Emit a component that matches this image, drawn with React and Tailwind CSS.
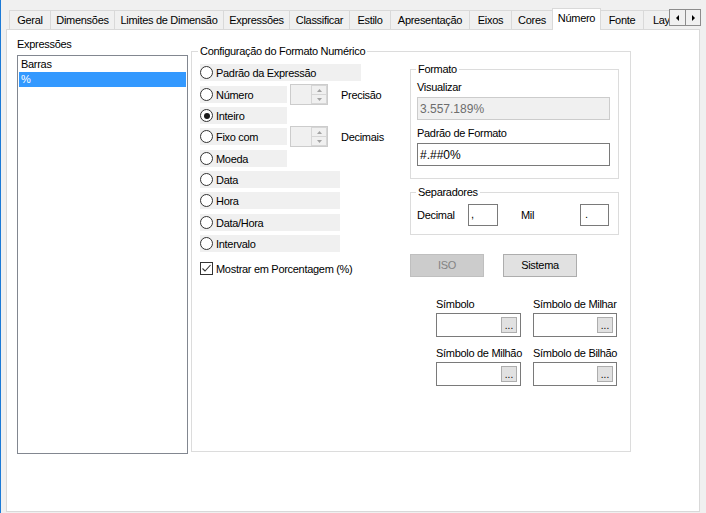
import React from 'react';

const tabs = [
  ['Geral', 41], ['Dimensões', 64], ['Limites de Dimensão', 109], ['Expressões', 66],
  ['Classificar', 60], ['Estilo', 41], ['Apresentação', 79], ['Eixos', 42], ['Cores', 41],
  ['Número', 49], ['Fonte', 42], ['Layout', 50],
];

const radios = [
  { label: 'Padrão da Expressão', w: 'w-[161px]', mt: 'mt-0' },
  { label: 'Número', w: 'w-[87px]', mt: 'mt-[5px]', spin: 'Precisão' },
  { label: 'Inteiro', w: 'w-[87px]', mt: 'mt-[4px]', checked: true },
  { label: 'Fixo com', w: 'w-[87px]', mt: 'mt-[4px]', spin: 'Decimais' },
  { label: 'Moeda', w: 'w-[87px]', mt: 'mt-[5px]' },
  { label: 'Data', w: 'w-[140px]', mt: 'mt-[4px]' },
  { label: 'Hora', w: 'w-[140px]', mt: 'mt-[4px]' },
  { label: 'Data/Hora', w: 'w-[140px]', mt: 'mt-[5px]' },
  { label: 'Intervalo', w: 'w-[140px]', mt: 'mt-[4px]' },
];

function Radio({ checked }) {
  return (
    <span className="w-[13px] h-[13px] shrink-0 rounded-full border border-[#333] bg-white flex items-center justify-center">
      {checked && <span className="w-[6px] h-[6px] rounded-full bg-[#1a1a1a]" />}
    </span>
  );
}

function Spinner() {
  return (
    <div className="w-[38px] h-[21px] shrink-0 border border-[#cccccc] bg-[#f0f0f0] flex justify-end">
      <div className="w-[16px] flex flex-col">
        <div className="flex-1 border border-[#d6d6d6] flex items-center justify-center">
          <svg width="5" height="3" viewBox="0 0 5 3"><path d="M2.5 0L5 3H0z" fill="#a3a3a3" /></svg>
        </div>
        <div className="flex-1 border border-t-0 border-[#d6d6d6] flex items-center justify-center">
          <svg width="5" height="3" viewBox="0 0 5 3"><path d="M0 0H5L2.5 3z" fill="#a3a3a3" /></svg>
        </div>
      </div>
    </div>
  );
}

function Legend({ children, left }) {
  return (
    <span className={`absolute -top-[8px] ${left} px-[2px] bg-white leading-[14px] whitespace-nowrap`}>{children}</span>
  );
}

function SymbolBox({ label, mt }) {
  return (
    <div className={mt}>
      <div className="leading-[14px] whitespace-nowrap">{label}</div>
      <div className="mt-[2px] h-[24px] border border-[#7a7a7a] bg-white flex items-center justify-end pr-[3px]">
        <div className="w-[16px] h-[16px] bg-[#e1e1e1] border border-[#adadad] flex items-end justify-center text-[10px] leading-[12px] tracking-normal">...</div>
      </div>
    </div>
  );
}

export default function App() {
  return (
    <div
      className="w-[706px] h-[513px] bg-[#f0f0f0] border-l border-[#1c7ad6] text-[11px] tracking-[-0.3px] text-black overflow-hidden"
      style={{ fontFamily: '"Liberation Sans", Arial, sans-serif' }}
    >
      {/* tab strip */}
      <div className="flex items-end mt-[10px] h-[19px] ml-[8px]">
        <div className="flex items-end w-[660px] h-[19px]">
          {tabs.map(([name, w], i) => {
            const sel = name === 'Número';
            const afterSel = i > 0 && tabs[i - 1][0] === 'Número';
            if (sel) {
              return (
                <div key={name} style={{ width: w }} className="relative z-10 shrink-0 h-[22px] -mb-[1px] bg-white border border-b-0 border-[#d9d9d9] flex justify-center pt-[2px] leading-[14px]">
                  {name}
                </div>
              );
            }
            return (
              <div key={name} style={{ width: w }} className={`shrink-0 h-[19px] bg-[#f0f0f0] border-t border-[#d9d9d9] ${afterSel ? '' : 'border-l'} flex items-center justify-center leading-[14px] whitespace-nowrap overflow-hidden`}>
                {name}
              </div>
            );
          })}
        </div>
        <div className="relative z-20 self-start -mt-[1px] flex h-[17px] bg-[#f0f0f0]">
          <div className="w-[17px] h-[17px] border border-[#8c8c8c] bg-[#f0f0f0] flex items-center justify-center">
            <svg width="3" height="6" viewBox="0 0 3 6"><path d="M3 0V6L0 3z" fill="#000" /></svg>
          </div>
          <div className="w-[15px] h-[17px] border border-l-0 border-[#8c8c8c] bg-[#f0f0f0] flex items-center justify-center">
            <svg width="3" height="6" viewBox="0 0 3 6"><path d="M0 0V6L3 3z" fill="#000" /></svg>
          </div>
        </div>
      </div>

      {/* panel */}
      <div className="ml-[5px] w-[694px] h-[483px] bg-white border border-[#d9d9d9] flex items-start pl-[10px]">
        {/* expressions list */}
        <div className="w-[171px] mt-[7px] shrink-0">
          <div className="leading-[14px]">Expressões</div>
          <div className="mt-[4px] h-[399px] border border-[#828790] bg-white p-[1px]">
            <div className="h-[15px] px-[2px] leading-[15px]">Barras</div>
            <div className="h-[15px] px-[2px] leading-[15px] bg-[#3399ff] text-white">%</div>
          </div>
        </div>

        {/* number format group */}
        <div className="relative ml-[3px] mt-[21px] w-[440px] h-[401px] shrink-0 border border-[#dcdcdc] flex pl-[8px]">
          <Legend left="left-[6px]">Configuração do Formato Numérico</Legend>

          <div className="w-[210px] shrink-0 pt-[12px]">
            {radios.map(r => (
              <div key={r.label} className={`flex items-center h-[17px] ${r.mt}`}>
                <div className={`${r.w} h-[17px] shrink-0 bg-[#f0f0f0] flex items-center`}>
                  <Radio checked={r.checked} />
                  <span className="ml-[3px] leading-[14px] whitespace-nowrap">{r.label}</span>
                </div>
                {r.spin && (
                  <>
                    <div className="ml-[3px]"><Spinner /></div>
                    <span className="ml-[13px] leading-[14px]">{r.spin}</span>
                  </>
                )}
              </div>
            ))}
            <div className="flex items-center h-[17px] mt-[8px]">
              <span className="w-[13px] h-[13px] border border-[#333] bg-white flex items-center justify-center">
                <svg width="11" height="11" viewBox="0 0 11 11"><path d="M1.5 5.5L4 8L9.5 2" fill="none" stroke="#333" strokeWidth="1.1" /></svg>
              </span>
              <span className="ml-[3px] leading-[14px]">Mostrar em Porcentagem (%)</span>
            </div>
          </div>

          <div className="w-[209px] shrink-0 pt-[17px]">
            {/* Formato */}
            <div className="relative h-[110px] border border-[#dcdcdc] pl-[6px] pr-[8px] pt-[10px]">
              <Legend left="left-[5px]">Formato</Legend>
              <div className="leading-[14px]">Visualizar</div>
              <div className="mt-[3px] h-[23px] border border-[#cccccc] bg-[#f0f0f0] text-[#6d6d6d] flex items-center pl-[2px] text-[12px] tracking-normal">3.557.189%</div>
              <div className="mt-[6px] leading-[14px]">Padrão de Formato</div>
              <div className="mt-[3px] h-[23px] border border-[#7a7a7a] bg-white flex items-center pl-[2px] text-[12px] tracking-normal">#.##0%</div>
            </div>

            {/* Separadores */}
            <div className="relative mt-[13px] h-[43px] border border-[#dcdcdc] pl-[6px] pt-[11px]">
              <Legend left="left-[5px]">Separadores</Legend>
              <div className="flex items-center">
                <span className="w-[51px] leading-[14px]">Decimal</span>
                <div className="w-[30px] h-[22px] border border-[#7a7a7a] bg-white pl-[2px] leading-[18px]">,</div>
                <span className="ml-[23px] w-[59px] leading-[14px]">Mil</span>
                <div className="w-[29px] h-[22px] border border-[#7a7a7a] bg-white pl-[4px] leading-[18px]">.</div>
              </div>
            </div>

            {/* buttons */}
            <div className="mt-[19px] flex gap-[19px]">
              <div className="w-[74px] h-[23px] bg-[#cccccc] border border-[#bfbfbf] text-[#838383] flex items-center justify-center">ISO</div>
              <div className="w-[74px] h-[23px] bg-[#e1e1e1] border border-[#adadad] flex items-center justify-center">Sistema</div>
            </div>

            {/* symbols */}
            <div className="ml-[26px] mt-[20px] grid grid-cols-[85px_84px] gap-x-[12px]">
              <SymbolBox label="Símbolo" mt="" />
              <SymbolBox label="Símbolo de Milhar" mt="" />
              <SymbolBox label="Símbolo de Milhão" mt="mt-[9px]" />
              <SymbolBox label="Símbolo de Bilhão" mt="mt-[9px]" />
            </div>
          </div>
        </div>
      </div>
    </div>
  );
}
